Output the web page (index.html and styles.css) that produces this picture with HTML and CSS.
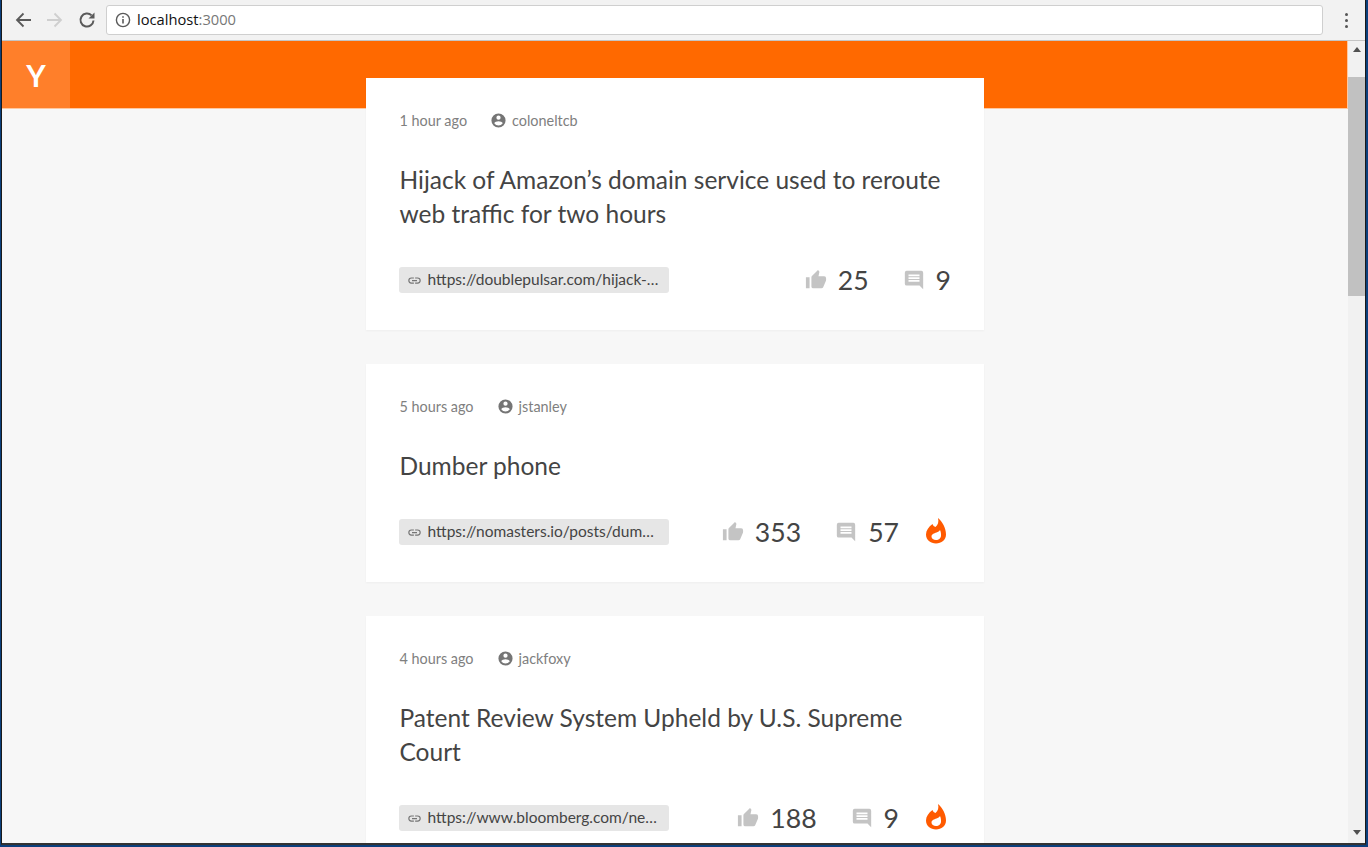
FILE: index.html
```html
<!DOCTYPE html>
<html lang="en">
<head>
<meta charset="utf-8">
<title>localhost:3000</title>
<link rel="stylesheet" href="styles.css">
</head>
<body>
<div class="window">
  <div class="toolbar">
    <svg class="nav nav-back" viewBox="0 0 18 18"><path d="M17 9H3.500M9.500 2.500 3 9l6.500 6.500" fill="none" stroke="#5a5a5a" stroke-width="1.800"/></svg>
    <svg class="nav nav-fwd" viewBox="0 0 18 18"><path d="M1 9h13.500M8.500 2.500 15 9l-6.500 6.500" fill="none" stroke="#cfcfcf" stroke-width="1.800"/></svg>
    <svg class="nav nav-reload" viewBox="0 0 18 18"><path d="M15.500 9.500A6.500 6.500 0 1 1 13.600 4.400" fill="none" stroke="#5a5a5a" stroke-width="2"/><path d="M10.500 7.500H16.500V1.500z" fill="#5a5a5a"/></svg>
    <div class="omnibox">
      <svg class="info" viewBox="0 0 16 16"><circle cx="8" cy="8" r="6.600" fill="none" stroke="#5a5a5a" stroke-width="1.400"/><path d="M7.200 7h1.600v4.600H7.200zM7.200 4.200h1.600v1.600H7.200z" fill="#5a5a5a"/></svg>
      <span class="host">localhost</span><span class="port">:3000</span>
    </div>
    <div class="kebab"><i></i><i></i><i></i></div>
  </div>
  <div class="viewport">
    <div class="page">
      <header class="appbar"><div class="logo">Y</div></header>
      <main class="feed">
        <article class="card">
          <div class="meta"><span class="time">1 hour ago</span><svg class="user-ic" viewBox="0 0 24 24"><path d="M12 2a10 10 0 1 0 0 20 10 10 0 0 0 0-20zm0 3a3 3 0 1 1 0 6 3 3 0 0 1 0-6zm0 14.200a7.200 7.200 0 0 1-6-3.200c0-2 4-3.100 6-3.100s6 1.100 6 3.100a7.200 7.200 0 0 1-6 3.200z"/></svg><span>coloneltcb</span></div>
          <h2 class="title">Hijack of Amazon’s domain service used to reroute web traffic for two hours</h2>
          <div class="foot">
            <div class="link"><svg class="link-ic" viewBox="0 0 24 24"><path d="M3.900 12A3.100 3.100 0 0 1 7 8.900h4V7H7a5 5 0 0 0 0 10h4v-1.900H7A3.100 3.100 0 0 1 3.900 12zM8 13h8v-2H8zm9-6h-4v1.900h4a3.100 3.100 0 0 1 0 6.200h-4V17h4a5 5 0 0 0 0-10z"/></svg><span class="url">https://doublepulsar.com/hijack-of-amazons</span></div>
            <div class="stats">
              <svg class="stat-ic" viewBox="0 0 24 24"><path d="M1 21h4V9H1zM23 10a2 2 0 0 0-2-2h-6.300l.95-4.570.03-.32a1.500 1.500 0 0 0-.44-1.060L14.170 1 7.590 7.590A2 2 0 0 0 7 9v10a2 2 0 0 0 2 2h9a2 2 0 0 0 1.840-1.220l3.020-7.050c.09-.23.14-.47.14-.73z"/></svg><span class="num num-votes">25</span>
              <svg class="stat-ic" viewBox="0 0 24 24"><path d="M22 4a2 2 0 0 0-2-2H4a2 2 0 0 0-2 2v12a2 2 0 0 0 2 2h14l4 4zM18 14H6v-2h12zm0-3H6V9h12zm0-3H6V6h12z"/></svg><span class="num">9</span>
            </div>
          </div>
        </article>
        <article class="card">
          <div class="meta"><span class="time">5 hours ago</span><svg class="user-ic" viewBox="0 0 24 24"><path d="M12 2a10 10 0 1 0 0 20 10 10 0 0 0 0-20zm0 3a3 3 0 1 1 0 6 3 3 0 0 1 0-6zm0 14.200a7.200 7.200 0 0 1-6-3.200c0-2 4-3.100 6-3.100s6 1.100 6 3.100a7.200 7.200 0 0 1-6 3.200z"/></svg><span>jstanley</span></div>
          <h2 class="title">Dumber phone</h2>
          <div class="foot">
            <div class="link"><svg class="link-ic" viewBox="0 0 24 24"><path d="M3.900 12A3.100 3.100 0 0 1 7 8.900h4V7H7a5 5 0 0 0 0 10h4v-1.900H7A3.100 3.100 0 0 1 3.900 12zM8 13h8v-2H8zm9-6h-4v1.900h4a3.100 3.100 0 0 1 0 6.200h-4V17h4a5 5 0 0 0 0-10z"/></svg><span class="url">https://nomasters.io/posts/dumber-phone</span></div>
            <div class="stats">
              <svg class="stat-ic" viewBox="0 0 24 24"><path d="M1 21h4V9H1zM23 10a2 2 0 0 0-2-2h-6.300l.95-4.570.03-.32a1.500 1.500 0 0 0-.44-1.060L14.170 1 7.590 7.590A2 2 0 0 0 7 9v10a2 2 0 0 0 2 2h9a2 2 0 0 0 1.840-1.220l3.020-7.050c.09-.23.14-.47.14-.73z"/></svg><span class="num num-votes">353</span>
              <svg class="stat-ic" viewBox="0 0 24 24"><path d="M22 4a2 2 0 0 0-2-2H4a2 2 0 0 0-2 2v12a2 2 0 0 0 2 2h14l4 4zM18 14H6v-2h12zm0-3H6V9h12zm0-3H6V6h12z"/></svg><span class="num">57</span>
              <svg class="fire" viewBox="0 0 20 26"><path fill-rule="evenodd" d="M12 0C13 4 12 7 9.500 9 8 8.500 7 7.500 6.500 6 2.500 9 0 12.500 0 16.500 0 22 4.500 25.500 10 25.500S20 22 20 16.500C20 10 16.500 4 12 0zM10 22C7.500 22 5.500 20.500 5.500 18.500 5.500 16 8 15.500 10.500 14.500 12 14 13.500 13 14 12 15 14 15 16 15 17.500 15 20 13 22 10 22z"/></svg>
            </div>
          </div>
        </article>
        <article class="card">
          <div class="meta"><span class="time">4 hours ago</span><svg class="user-ic" viewBox="0 0 24 24"><path d="M12 2a10 10 0 1 0 0 20 10 10 0 0 0 0-20zm0 3a3 3 0 1 1 0 6 3 3 0 0 1 0-6zm0 14.200a7.200 7.200 0 0 1-6-3.200c0-2 4-3.100 6-3.100s6 1.100 6 3.100a7.200 7.200 0 0 1-6 3.200z"/></svg><span>jackfoxy</span></div>
          <h2 class="title">Patent Review System Upheld by U.S. Supreme Court</h2>
          <div class="foot">
            <div class="link"><svg class="link-ic" viewBox="0 0 24 24"><path d="M3.900 12A3.100 3.100 0 0 1 7 8.900h4V7H7a5 5 0 0 0 0 10h4v-1.900H7A3.100 3.100 0 0 1 3.900 12zM8 13h8v-2H8zm9-6h-4v1.900h4a3.100 3.100 0 0 1 0 6.200h-4V17h4a5 5 0 0 0 0-10z"/></svg><span class="url">https://www.bloomberg.com/news/articles</span></div>
            <div class="stats">
              <svg class="stat-ic" viewBox="0 0 24 24"><path d="M1 21h4V9H1zM23 10a2 2 0 0 0-2-2h-6.300l.95-4.570.03-.32a1.500 1.500 0 0 0-.44-1.060L14.170 1 7.590 7.590A2 2 0 0 0 7 9v10a2 2 0 0 0 2 2h9a2 2 0 0 0 1.840-1.220l3.020-7.050c.09-.23.14-.47.14-.73z"/></svg><span class="num num-votes">188</span>
              <svg class="stat-ic" viewBox="0 0 24 24"><path d="M22 4a2 2 0 0 0-2-2H4a2 2 0 0 0-2 2v12a2 2 0 0 0 2 2h14l4 4zM18 14H6v-2h12zm0-3H6V9h12zm0-3H6V6h12z"/></svg><span class="num">9</span>
              <svg class="fire" viewBox="0 0 20 26"><path fill-rule="evenodd" d="M12 0C13 4 12 7 9.500 9 8 8.500 7 7.500 6.500 6 2.500 9 0 12.500 0 16.500 0 22 4.500 25.500 10 25.500S20 22 20 16.500C20 10 16.500 4 12 0zM10 22C7.500 22 5.500 20.500 5.500 18.500 5.500 16 8 15.500 10.500 14.500 12 14 13.500 13 14 12 15 14 15 16 15 17.500 15 20 13 22 10 22z"/></svg>
            </div>
          </div>
        </article>
      </main>
    </div>
    <div class="scrollbar">
      <div class="arrow-up"></div>
      <div class="thumb"></div>
      <div class="track"></div>
      <div class="arrow-down"></div>
    </div>
  </div>
</div>
</body>
</html>
```
FILE: styles.css
```css
* { box-sizing: border-box; }
html, body { margin: 0; height: 100%; overflow: hidden; }
body { background: #0b3f7c; padding: 0 2px 2px 1px; font-family: Lato, sans-serif; color: #3c3c3c; }
.window { height: 100%; display: flex; flex-direction: column; border-left: 1px solid #1a1a1a; border-bottom: 2px solid #333; border-right: 1px solid #1a1a1a; background: #f2f2f2; }
.toolbar { height: 41px; flex: none; display: flex; align-items: center; padding-left: 12px; background: #f2f2f2; border-bottom: 1px solid #c4c4c4; }
.nav { width: 18px; height: 18px; flex: none; margin-right: 14px; }
.omnibox { width: 1217px; height: 30px; margin-left: -4px; display: flex; align-items: center; padding: 0 0 2px 8px; background: #fff; border: 1px solid #cfcfcf; border-radius: 3px; font: 14.700px "Open Sans", sans-serif; }
.info { width: 16px; height: 16px; margin: 2px 6px 0 0; }
.host { color: #111; }
.port { color: #777; }
.kebab { margin-left: 22px; display: flex; flex-direction: column; gap: 3px; }
.kebab i { width: 3px; height: 3px; border-radius: 50%; background: #555; }
.viewport { flex: 1; min-height: 0; display: flex; }
.page { flex: 1; min-width: 0; overflow: hidden; background: #f7f7f7; }
.appbar { height: 68px; background: #ff6900; border-bottom: 1px solid #ffc8a0; border-right: 1px solid #ffc8a0; }
.logo { width: 68px; height: 67px; display: flex; align-items: center; justify-content: center; background: #ff7f2a; color: #fff; font-size: 30px; font-weight: 700; }
.feed { width: 618px; margin: -31px 0 0 364px; display: flex; flex-direction: column; gap: 34px; }
.card { flex: none; background: #fff; padding: 33px 33px 0 33.500px; box-shadow: 0 1px 2px rgba(0,0,0,.04); }
.meta { height: 18px; display: flex; align-items: center; font-size: 14.400px; font-weight: 400; color: #808080; }
.time { margin-right: 23px; }
.user-ic { width: 17px; height: 17px; margin-right: 5px; fill: #757575; }
.title { margin: 34px 0 0; font-size: 24.500px; font-weight: 400; line-height: 34px; color: #444; }
.foot { height: 26px; margin: 36px 0 37px; display: flex; align-items: center; justify-content: space-between; }
.link { width: 270px; height: 26px; margin-left: -0.500px; display: flex; align-items: center; padding: 0 10px 2px 7.500px; background: #e6e6e6; border-radius: 3px; font-size: 15.500px; color: #444; }
.link-ic { width: 15px; height: 15px; flex: none; margin: 2px 6px 0 0; fill: #757575; }
.url { overflow: hidden; white-space: nowrap; text-overflow: ellipsis; }
.stats { display: flex; align-items: center; }
.stat-ic { width: 22px; height: 22px; fill: #c4c4c4; margin-right: 11px; }
.num { font-size: 26.600px; font-weight: 400; line-height: 30px; color: #444; }
.num-votes { margin-right: 34px; }
.fire { width: 20px; height: 26px; margin-left: 27px; margin-right: 5px; margin-top: -3px; fill: #ff5a00; }
.scrollbar { width: 17px; flex: none; display: flex; flex-direction: column; align-items: stretch; background: #f1f1f1; }
.arrow-up, .arrow-down { height: 36px; flex: none; display: flex; justify-content: center; }
.arrow-up::before { content: ""; margin-top: 6px; border: 4px solid transparent; border-bottom: 5px solid #505050; border-top: 0; height: 0; }
.arrow-down { height: 17px; }
.arrow-down::before { content: ""; margin-top: 4px; border: 4px solid transparent; border-top: 5px solid #505050; border-bottom: 0; height: 0; }
.thumb { height: 219px; flex: none; background: #c1c1c1; }
.track { flex: 1; }
```
